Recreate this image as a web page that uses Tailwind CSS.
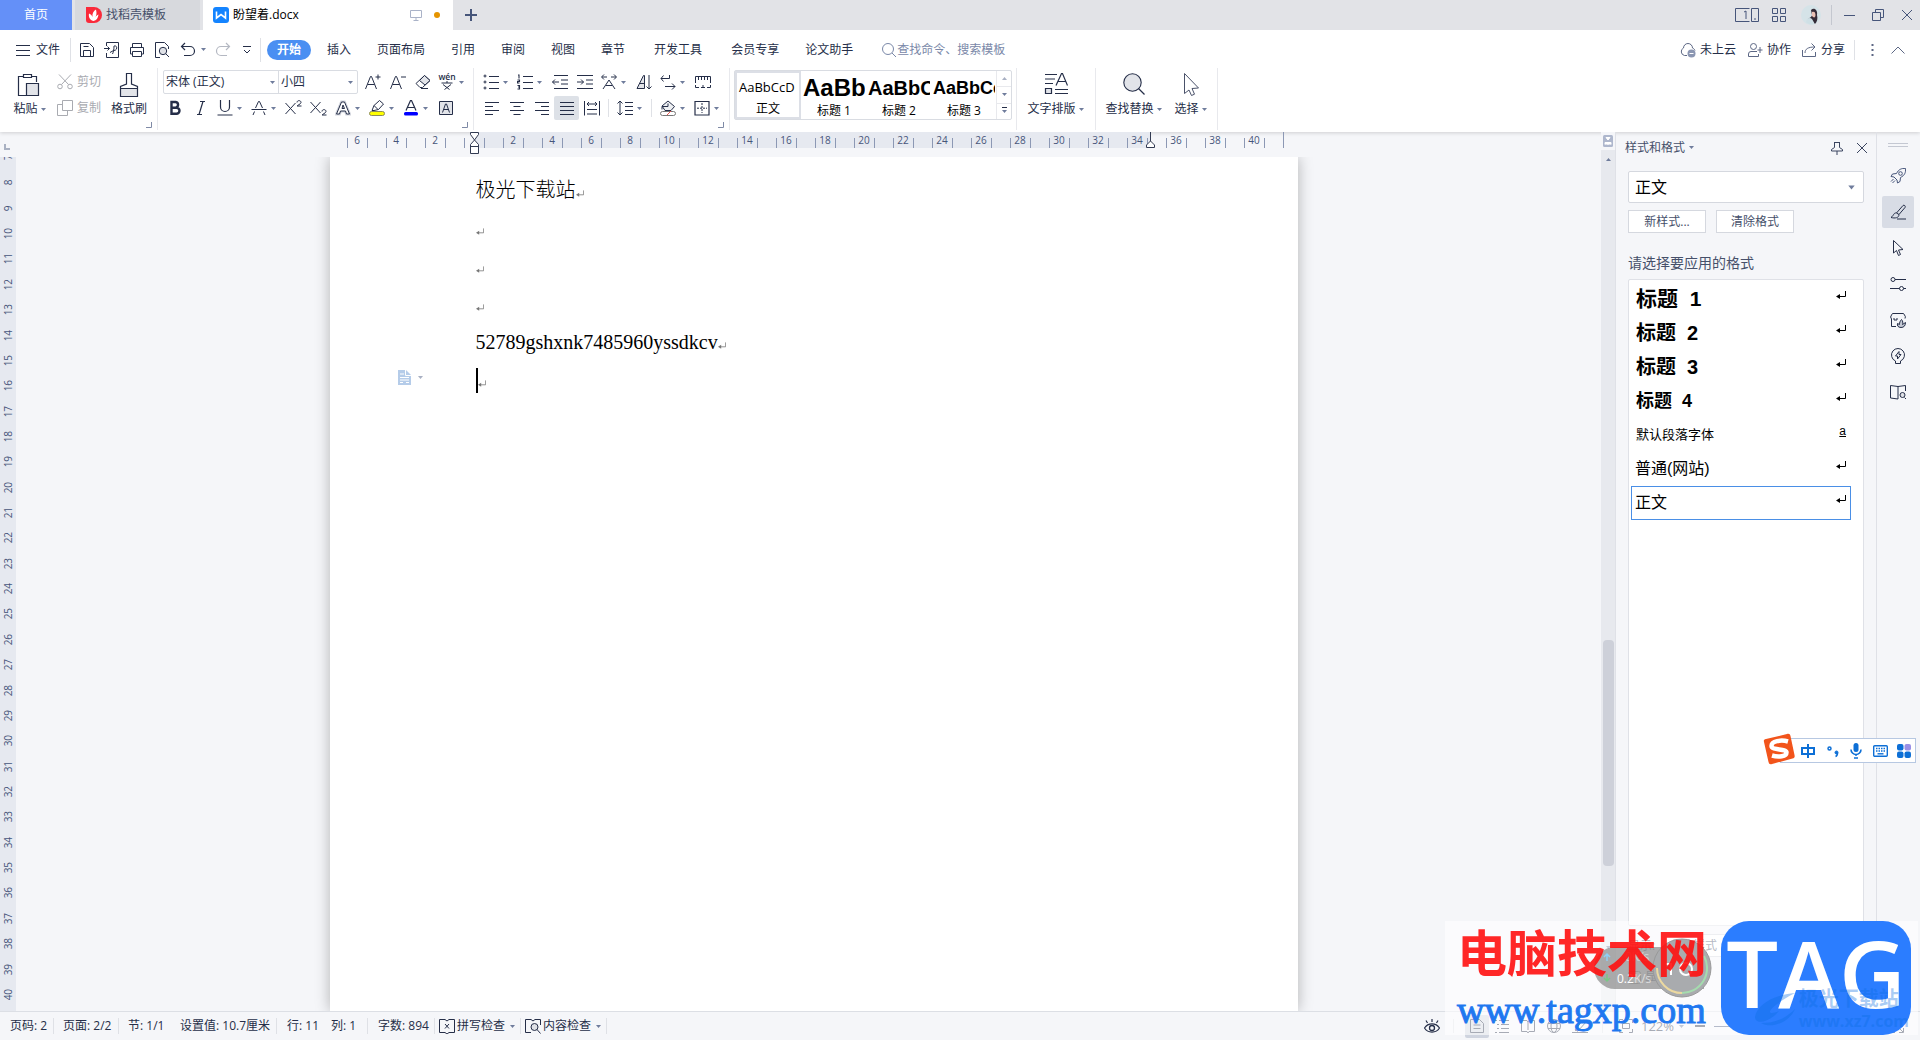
<!DOCTYPE html>
<html lang="zh-CN">
<head>
  <meta charset="UTF-8" />
  <meta name="viewport" content="width=device-width, initial-scale=1.0"/>
  <title>盼望着.docx</title>
  <script src="https://cdn.jsdelivr.net/npm/@tailwindcss/browser@4"></script>
  <style>
    body {
      font-family: 'Open Sans', 'Noto Sans CJK SC', sans-serif;
      fill: none;
      stroke: currentColor;
    }
    svg {
      flex-shrink: 0;
    }
  </style>
</head>
<body class="relative flex h-screen flex-col overflow-hidden bg-[#f5f6f9] text-xs leading-4 text-[#252e48]">

<!-- icon sheet -->
<svg class="hidden">
  <symbol id="caret" viewBox="0 0 7 7"><path d="M1 2h5L3.500 5z" fill="#6f7c9c" stroke="none"/></symbol>
  <symbol id="corner" viewBox="0 0 6 6"><path d="M5.500 0v5.500H0" stroke="#7f8aa6"/></symbol>
  <symbol id="close" viewBox="0 0 12 12"><path d="M1 1l10 10M11 1L1 11"/></symbol>
  <symbol id="save" viewBox="0 0 16 16"><path d="M1.500 1.500h9l4 4v9h-13zM4.500 14V8.500h7V14M4.500 4.500h5"/></symbol>
  <symbol id="exportpdf" viewBox="0 0 16 16"><path d="M2.500 4V.500h12v15h-12V11M0 6.500h5.500M3.500 4.500l2 2-2 2M8.500 12c1-2 1.500-5 1.500-8 4-1 3.500 5-.5 4.500L6 10.500"/></symbol>
  <symbol id="print" viewBox="0 0 16 16"><path d="M3.500 5V1.500h9V5M3.500 12h-2V5.500h13V12h-2M3.500 9.500h9v5h-9z"/></symbol>
  <symbol id="preview" viewBox="0 0 16 16"><path d="M6 15.500H1.500V.500h9l4 4V7"/><circle cx="9" cy="9" r="3.700" fill="#dfe1e6"/><path d="M11.700 11.700L15 15"/></symbol>
  <symbol id="undo" viewBox="0 0 16 16"><path d="M5 1L1.500 4.500 5 8M2 4.500h8a4.500 4.500 0 010 9H4" stroke-width="1.200"/></symbol>
  <symbol id="redo" viewBox="0 0 16 16"><path d="M11 1l3.500 3.500L11 8M14 4.500H6a4.500 4.500 0 000 9h6" stroke-width="1.200"/></symbol>
  <symbol id="more" viewBox="0 0 10 10"><path d="M1 1.500h8M2 5l3 3 3-3"/></symbol>
  <symbol id="search" viewBox="0 0 16 16"><circle cx="7" cy="7" r="5.500"/><path d="M11 11l4 4"/></symbol>
  <symbol id="paste" viewBox="0 0 24 26"><path d="M7 4.500H2.500v19H10M16 4.500h4.500V10M7.500 2.500h8v3h-8z" stroke-width="1.200"/><path d="M10.500 11.500h12v12h-12z" fill="#e2e4e9" stroke-width="1.200"/></symbol>
  <symbol id="brush" viewBox="0 0 24 26"><path d="M3.500 16.500h17v8h-17z" fill="#e2e4e9"/><path d="M3.500 24.500v-10l6-2.500V1.500h5V12l6 2.500v10zM3.500 16.500h17" stroke-width="1.200"/></symbol>
  <symbol id="cut" viewBox="0 0 16 16"><circle cx="3" cy="12.500" r="2.300"/><circle cx="13" cy="12.500" r="2.300"/><path d="M2 .500l9.500 10M14 .500L4.500 10.500"/></symbol>
  <symbol id="copy" viewBox="0 0 16 16"><path d="M5.500 .500h10v10h-10zM5 4.500H.500v11h10V11"/></symbol>
  <symbol id="agrow" viewBox="0 0 16 16"><path d="M.500 15L5.500 2.500h1L11.500 15M2.500 10.500h7M13 .500v5M10.500 3h5"/></symbol>
  <symbol id="ashrink" viewBox="0 0 16 16"><path d="M.500 15L5.500 2.500h1L11.500 15M2.500 10.500h7M11 3h5"/></symbol>
  <symbol id="eraser" viewBox="0 0 16 16"><path d="M1 9.500L9.500 1.500l5.500 5-7.500 7H5z"/><path d="M4.500 6.500L9.500 1.500l5.500 5-5 4.500z" fill="#e2e4e9"/><path d="M6 14.500h7"/></symbol>
  <symbol id="strike" viewBox="0 0 16 16"><path d="M4.500 8L7.500 1.500h1L11.500 8M.500 9.500h15M3.500 11.500L2 15M12.500 11.500L14 15"/></symbol>
  <symbol id="underline" viewBox="0 0 16 16"><path d="M3.500 0v7a4.500 4.500 0 009 0V0M.500 15h15" stroke-width="1.200"/></symbol>
  <symbol id="bold" viewBox="0 0 16 16"><path d="M4.500 2h4.200a2.900 2.900 0 010 5.700H4.500zM4.500 7.700h5a3 3 0 010 6H4.500z" stroke-width="2.400"/></symbol>
  <symbol id="italic" viewBox="0 0 16 16"><path d="M7 1.500h5M4 14.500h5M10 1.500l-4 13" stroke-width="1.200"/></symbol>
  <symbol id="sup" viewBox="0 0 17 16"><path d="M.500 3l10 11M10.500 3l-10 11M12 2.500c0-2.500 4-2.500 4 0 0 1.500-4 3-4 3.500h4.500"/></symbol>
  <symbol id="sub" viewBox="0 0 17 16"><path d="M.500 2l10 11M10.500 2l-10 11M12 11.500c0-2.500 4-2.500 4 0 0 1.500-4 3-4 3.500h4.500"/></symbol>
  <symbol id="aglow" viewBox="0 0 16 16"><path d="M1.500 14L6.500 2h3l5 12h-3l-1-3h-5l-1 3zM7 8.500h2.500L8 5z" stroke="#d3d6de" stroke-width="3"/><path d="M1.500 14L6.500 2h3l5 12h-3l-1-3h-5l-1 3zM7 8.500h2.500L8 5z" fill="#fff"/></symbol>
  <symbol id="marker" viewBox="0 0 16 16"><path d="M3 10.500l2-5 5.500-5 4 3.500-5 5.500-4.500 1zM5 5.500l4 4"/><rect x=".5" y="11.500" width="15" height="4" rx="2" fill="#ff0" stroke="#8b8b5a"/></symbol>
  <symbol id="acolor" viewBox="0 0 16 16"><path d="M3 10.500L7.500.500h1L13 10.500M4.500 7.500h7" stroke-width="1.200"/><rect x="1" y="12" width="14" height="3.500" rx="1.500" fill="#00f" stroke="none"/></symbol>
  <symbol id="abox" viewBox="0 0 16 16"><path d="M1.500 1.500h13v13h-13z" fill="#e2e4e9"/><path d="M4.500 12.500L7.500 4h1l3 8.500M5.500 9.500h5"/></symbol>
  <symbol id="bullets" viewBox="0 0 16 16"><circle cx="2" cy="2" r="1"/><circle cx="2" cy="8" r="1"/><circle cx="2" cy="14" r="1"/><path d="M6 2.500h10M6 8.500h10M6 14.500h10" stroke-width="1.200"/></symbol>
  <symbol id="numbers" viewBox="0 0 16 16"><path d="M1 1h1v3.500M.500 6h2v1.500h-2V9h2M.500 11.500h2v3.500h-2M1 13h1.500M6 2.500h10M6 8.500h10M6 14.500h10" stroke-width="1.100"/></symbol>
  <symbol id="outdent" viewBox="0 0 16 16"><path d="M2 1.500h14M9 6h7M9 10h7M2 14.500h14M.500 8H7M3 5.500L.500 8 3 10.500"/></symbol>
  <symbol id="indent" viewBox="0 0 16 16"><path d="M0 1.500h16M9 6h7M9 10h7M0 14.500h16M0 8h6.500M4 5.500L6.500 8 4 10.500"/></symbol>
  <symbol id="scale" viewBox="0 0 16 16"><path d="M2 15L8 6l6 9M5 11.500h6M1 3h5M10 3h5M3 .500L.500 3 3 5.500M13 .500L15.500 3 13 5.500"/></symbol>
  <symbol id="sort" viewBox="0 0 16 16"><path d="M1 14.500L7.500 1.500h1v13zM4 9.500h4.500" fill="#e2e4e9"/><path d="M13 1v14M10.500 12.500L13 15l2.500-2.500"/></symbol>
  <symbol id="wrap" viewBox="0 0 16 16"><path d="M3.500 1.500L1 4.500l2.500 3M1 4.500h8.500V1M5 12.500h10M12 9.500l3 3-3 3"/></symbol>
  <symbol id="tabs" viewBox="0 0 16 16"><path d="M.500 9V2.500h15V9M3.500 3v3M6.500 3v3M9.500 3v3M12.500 3v3M.500 11v2.500H4M15.500 11v2.500H12M6 13.500h4M8 11v2.500"/></symbol>
  <symbol id="left" viewBox="0 0 16 16"><path d="M1 2.500h14M1 6.500h8M1 10.500h14M1 14.500h8" stroke-width="1.200"/></symbol>
  <symbol id="center" viewBox="0 0 16 16"><path d="M1 2.500h14M4.500 6.500h7M1 10.500h14M4.500 14.500h7" stroke-width="1.200"/></symbol>
  <symbol id="right" viewBox="0 0 16 16"><path d="M1 2.500h14M7 6.500h8M1 10.500h14M7 14.500h8" stroke-width="1.200"/></symbol>
  <symbol id="justify" viewBox="0 0 16 16"><path d="M1 2.500h14M1 6.500h14M1 10.500h14M1 14.500h14" stroke-width="1.200"/></symbol>
  <symbol id="distribute" viewBox="0 0 16 16"><path d="M.500 1v14.500M15.500 1v14.500M3 4h10M5 2L3 4l2 2M11 2l2 2-2 2M3 9.500h10M3 14h10"/></symbol>
  <symbol id="spacing" viewBox="0 0 16 16"><path d="M3 1v14M.500 3.500L3 1l2.500 2.500M.500 12.500L3 15l2.500-2.500M8 2.500h8M8 6.500h8M8 10.500h8M8 14.500h8"/></symbol>
  <symbol id="bucket" viewBox="0 0 16 16"><path d="M2 6l6-5 6.500 5.500L11 10.500H5z" fill="#eef0f3"/><path d="M2 6.500h6V3.500M2 6.500v3"/><rect x=".5" y="11.500" width="15" height="4" rx="2" fill="#fff" stroke="#777"/><path d="M7 15l4-4" stroke="#e8544f"/></symbol>
  <symbol id="borders" viewBox="0 0 16 16"><path d="M1 1.500h14v13.500H1z" stroke-width="1.200"/><path d="M8 3v10M3 8.200h10" stroke-dasharray="2 1"/></symbol>
  <symbol id="typeset" viewBox="0 0 24 24"><path d="M1 2.500h12M1 7h10M1 11.500h8M11 17.500h13M11 21.500h13M12 13.500L17.500 1.500h1L23.500 13.500M14 9.500h8" stroke-width="1.200"/><path d="M1.500 16.500h6v5h-6z" fill="#e2e4e9" stroke-width="1.200"/></symbol>
  <symbol id="find" viewBox="0 0 24 24"><circle cx="10.500" cy="10.500" r="8.700" fill="#e2e4e9" stroke-width="1.100"/><path d="M16.500 16.500l6 6" stroke-width="1.300"/></symbol>
  <symbol id="pointer" viewBox="0 0 24 24"><path d="M5.500 1.500v20l4.500-3.500 2.500 5.500 3-1.300-2.500-5.700 6.500-.5z" stroke="#4a526a"/></symbol>
  <symbol id="mark" viewBox="0 0 10 9"><path d="M9.500 0v5.500H2" /><path d="M4 3L0 5.500 4 8z" fill="currentColor" stroke="none"/></symbol>
  <symbol id="cursor" viewBox="0 0 16 16"><path d="M3.500 .500v12.500l3-2.500 2 5 2-1-2-4.500 4.500-.5z"/></symbol>
</svg>

<header class="shrink-0 bg-white shadow-[0_1px_4px_rgba(0,0,0,0.16)]">
  <!-- window tabs -->
  <div class="flex h-[30px] items-stretch gap-[3px] bg-[#e2e3e7]">
    <button class="w-[72px] bg-[#6490f8] text-white">首页</button>
    <button class="flex w-[125px] items-center gap-1 bg-[#d7d9dd] pl-[11px] text-[#46506a]">
      <svg class="size-4" viewBox="0 0 16 16" stroke="none"><path d="M0 0h8a8 8 0 010 16H3a3 3 0 01-3-3z" fill="#fa2a3a"/><path d="M7.500 14C3 13 2.500 9 3 6.500 5 7.500 6 8.500 6.500 10 6 6.500 7.500 4 10 2.500c1 4 .5 6-1 8 1-1.500 2-2.500 3.500-3-.5 3.500-2 6-5 6.500z" fill="#fff"/></svg>
      找稻壳模板
    </button>
    <div class="flex w-[250px] items-center bg-white pl-[10px] text-black">
      <svg class="mr-1 size-4" viewBox="0 0 16 16" stroke="none"><rect width="16" height="16" rx="3" fill="#1484ff"/><path d="M3.500 4.500v6.500L8 7.500l4.500 3.500V4.500" stroke="#fff" stroke-width="1.600"/></svg>
      盼望着.docx
      <svg class="ml-auto size-3" viewBox="0 0 12 12" stroke="#aab3c8"><path d="M.500 1.500h11v7H.500zM6 8.500v3M3.500 11.500h5"/></svg>
      <span class="mr-[13px] ml-3 size-[6px] rounded-full bg-[#e59400]"></span>
    </div>
    <button class="w-7 pl-[9px]" aria-label="新建"><svg class="size-3" viewBox="0 0 12 12" stroke="#46557a" stroke-width="2"><path d="M6 0v12M0 6h12"/></svg></button>
    <div class="ml-auto flex items-center text-[#46557a]">
      <svg class="mr-[13px] h-[14px] w-6" viewBox="0 0 24 14"><path d="M14.500 .500H.500v13h14M16.500 .500h7v13h-7zM9 4l2-1v8M19 11h2"/></svg>
      <svg class="mr-[15px] h-[14px] w-[14px]" viewBox="0 0 14 14"><path d="M.500 .500h5v5h-5zM8.500 .500h5v5h-5zM.500 8.500h5v5h-5zM8.500 8.500h5v5h-5z"/></svg>
      <svg class="mr-[10px] size-5" viewBox="0 0 20 20" stroke="none"><circle cx="10" cy="10" r="10" fill="#d5e3e8"/><path d="M10 5c3-3 7 0 6 5 1 4 0 7-2 9-2-4-5-5-8-4 2-2 5-3 5-5z" fill="#352c38"/><path d="M11 7c2-1 3.500 0 3.500 3s-2 3-3.500 1z" fill="#eac0b4"/><path d="M6 14c3-2 6-1 7 5-3 1-6 0-8-2z" fill="#cfe0e6"/></svg>
      <span class="mr-3 h-5 w-px bg-[#c4c7cf]"></span>
      <button aria-label="最小化" class="mr-[17px]"><svg class="h-3 w-[11px]" viewBox="0 0 11 12"><path d="M0 6.500h11"/></svg></button>
      <button aria-label="还原" class="mr-[17px]"><svg class="size-3" viewBox="0 0 12 12"><path d="M.500 3.500h8v8h-8zM3.500 3V.500h8v8H9"/></svg></button>
      <button aria-label="关闭" class="mr-[7px]"><svg class="size-3"><use href="#close"/></svg></button>
    </div>
  </div>

  <!-- menu row -->
  <nav class="flex h-[38px] items-center pt-px">
    <button class="ml-4 flex items-center gap-[6px]"><svg class="h-3 w-[14px]" viewBox="0 0 14 12"><path d="M0 1.500h14M0 6.500h14M0 11.500h14"/></svg>文件</button>
    <span class="mr-2 ml-[10px] h-6 w-px bg-[#dfe1e6]"></span>
    <div class="flex items-center gap-[9px]">
      <button aria-label="保存"><svg class="size-4"><use href="#save"/></svg></button>
      <button aria-label="输出为PDF"><svg class="size-4"><use href="#exportpdf"/></svg></button>
      <button aria-label="打印"><svg class="size-4"><use href="#print"/></svg></button>
      <button aria-label="打印预览"><svg class="size-4"><use href="#preview"/></svg></button>
    </div>
    <button aria-label="撤销" class="ml-[10px] flex items-center gap-1"><svg class="size-4"><use href="#undo"/></svg><svg class="size-[7px]"><use href="#caret"/></svg></button>
    <button aria-label="恢复" class="ml-2 text-[#b4b8c2]"><svg class="size-4"><use href="#redo"/></svg></button>
    <button aria-label="更多" class="ml-[11px]"><svg class="size-[10px]"><use href="#more"/></svg></button>
    <span class="ml-2 h-6 w-px bg-[#dfe1e6]"></span>
    <button class="ml-[6px] h-5 w-11 rounded-full bg-[#4a8ff2] font-bold text-white">开始</button>
    <div class="ml-4 flex gap-[26px]">
      <button>插入</button>
      <button>页面布局</button>
      <button>引用</button>
      <button>审阅</button>
      <button>视图</button>
      <button>章节</button>
      <button class="px-[3px]">开发工具</button>
      <button>会员专享</button>
      <button>论文助手</button>
    </div>
    <label class="ml-7 flex items-center text-[#7a88a8]">
      <svg class="size-4"><use href="#search"/></svg>
      <input type="text" aria-label="查找" placeholder="查找命令、搜索模板" class="w-32 outline-none placeholder:text-[#7a88a8]">
    </label>
    <div class="ml-auto flex items-center">
      <button class="flex items-center gap-1"><svg class="size-4" viewBox="0 0 16 16" stroke="#5c6784"><path d="M7 13.500H4.500A4 4 0 013.500 6 4.500 4.500 0 0112.500 6c1.500.5 2 1.500 2.500 2.500"/><circle cx="11.500" cy="11.500" r="4" fill="#8b96b2" stroke="none"/><path d="M9.500 11.500h4" stroke="#fff"/></svg>未上云</button>
      <button class="ml-[11px] flex items-center gap-1"><svg class="size-4" viewBox="0 0 16 16" stroke="#5c6784"><circle cx="6.500" cy="4.500" r="3"/><path d="M10 9.500H4a2.500 2.500 0 00-2.500 2.500v2.500h10V12M13 5v6M10.500 8h5"/></svg>协作</button>
      <button class="ml-[10px] flex items-center gap-1"><svg class="size-4" viewBox="0 0 16 16" stroke="#5c6784"><path d="M1.500 8v6.500h13V10M4 11c0-4 3-6 9.500-6M10.500 1.500L14 5l-3.500 3.500"/></svg>分享</button>
      <span class="ml-[9px] h-5 w-px bg-[#dfe1e6]"></span>
      <button aria-label="更多操作" class="ml-4"><svg class="h-3 w-[3px]" viewBox="0 0 3 12" stroke="none" fill="#5c6784"><path d="M.500 0h2v2h-2zM.500 5h2v2h-2zM.500 10h2v2h-2z"/></svg></button>
      <button aria-label="折叠功能区" class="mr-[15px] ml-[17px]"><svg class="h-2 w-[14px]" viewBox="0 0 14 8" stroke="#5c6784"><path d="M.500 7.500L7 1l6.500 6.500"/></svg></button>
    </div>
  </nav>

  <!-- ribbon -->
  <div class="flex h-16 pb-[2px]">
    <section class="relative flex w-[158px] border-r border-[#e8e9ed] pt-1">
      <button class="flex w-12 flex-col items-center gap-[3px] pl-2">
        <svg class="h-[26px] w-6"><use href="#paste"/></svg>
        <span class="flex items-center gap-[2px] pl-1 whitespace-nowrap">粘贴<svg class="size-[7px]"><use href="#caret"/></svg></span>
      </button>
      <div class="ml-[9px] flex flex-col gap-[10px] pt-[2px] text-[#a9abb1]">
        <button class="flex items-center gap-1"><svg class="size-4"><use href="#cut"/></svg>剪切</button>
        <button class="flex items-center gap-1"><svg class="size-4"><use href="#copy"/></svg>复制</button>
      </div>
      <button class="ml-[10px] flex flex-col items-center gap-[3px]">
        <svg class="h-[26px] w-6"><use href="#brush"/></svg>格式刷
      </button>
      <svg class="absolute right-[5px] bottom-[2px] size-[6px]"><use href="#corner"/></svg>
    </section>

    <section class="relative flex w-[316px] flex-col gap-[2px] border-r border-[#e8e9ed] pt-[2px] pl-[5px]">
      <div class="flex h-6 items-center">
        <div class="mr-[2px] flex h-6 w-[195px] rounded-xs border border-[#d9dce2]">
          <label class="relative flex w-[115px] items-center border-r border-[#d9dce2]">
            <select aria-label="字体" class="w-full appearance-none pl-[2px] outline-none"><option>宋体 (正文)</option></select>
            <svg class="absolute right-[2px] size-[7px]"><use href="#caret"/></svg>
          </label>
          <label class="relative flex flex-1 items-center">
            <select aria-label="字号" class="w-full appearance-none pl-[2px] outline-none"><option>小四</option></select>
            <svg class="absolute right-[3px] size-[7px]"><use href="#caret"/></svg>
          </label>
        </div>
        <button aria-label="增大字号" class="flex w-[25px] justify-center"><svg class="size-4"><use href="#agrow"/></svg></button>
        <button aria-label="减小字号" class="flex w-[25px] justify-center"><svg class="size-4"><use href="#ashrink"/></svg></button>
        <button aria-label="清除格式" class="flex w-[25px] justify-center"><svg class="size-4"><use href="#eraser"/></svg></button>
        <button aria-label="拼音指南" class="flex w-[34px] items-center gap-[3px] pl-1">
          <svg class="size-4 overflow-visible" viewBox="0 0 16 16"><text x="8" y="6" text-anchor="middle" font-size="8.500" font-weight="600" fill="currentColor" stroke="none">wén</text><path d="M2.500 9h11M8 7v2M4 10.500l6.500 5M12 10.500l-6.500 5"/></svg>
          <svg class="size-[7px]"><use href="#caret"/></svg>
        </button>
      </div>
      <div class="flex h-6 items-center">
        <button aria-label="加粗" class="flex w-[25px] justify-center pr-px"><svg class="size-4"><use href="#bold"/></svg></button>
        <button aria-label="倾斜" class="flex w-[25px] justify-center"><svg class="size-4"><use href="#italic"/></svg></button>
        <button aria-label="下划线" class="flex w-[34px] items-center gap-[3px] pl-1"><svg class="size-4"><use href="#underline"/></svg><svg class="size-[7px]"><use href="#caret"/></svg></button>
        <button aria-label="删除线" class="flex w-[34px] items-center gap-[3px] pl-1"><svg class="size-4"><use href="#strike"/></svg><svg class="size-[7px]"><use href="#caret"/></svg></button>
        <button aria-label="上标" class="flex w-[25px] justify-center"><svg class="h-4 w-[17px]"><use href="#sup"/></svg></button>
        <button aria-label="下标" class="flex w-[25px] justify-center"><svg class="h-4 w-[17px]"><use href="#sub"/></svg></button>
        <button aria-label="文字效果" class="flex w-[34px] items-center gap-[3px] pl-1"><svg class="size-4"><use href="#aglow"/></svg><svg class="size-[7px]"><use href="#caret"/></svg></button>
        <button aria-label="突出显示" class="flex w-[34px] items-center gap-[3px] pl-1"><svg class="size-4"><use href="#marker"/></svg><svg class="size-[7px]"><use href="#caret"/></svg></button>
        <button aria-label="字体颜色" class="flex w-[34px] items-center gap-[3px] pl-1"><svg class="size-4"><use href="#acolor"/></svg><svg class="size-[7px]"><use href="#caret"/></svg></button>
        <button aria-label="字符底纹" class="flex w-[25px] justify-center"><svg class="size-4"><use href="#abox"/></svg></button>
      </div>
      <svg class="absolute right-[5px] bottom-[2px] size-[6px]"><use href="#corner"/></svg>
    </section>

    <section class="relative flex w-64 flex-col gap-[2px] border-r border-[#e8e9ed] pt-[2px] pl-[5px]">
      <div class="flex h-6 items-center">
        <button aria-label="项目符号" class="flex w-[34px] items-center gap-[3px] pl-1"><svg class="size-4"><use href="#bullets"/></svg><svg class="size-[7px]"><use href="#caret"/></svg></button>
        <button aria-label="编号" class="flex w-[34px] items-center gap-[3px] pl-1"><svg class="size-4"><use href="#numbers"/></svg><svg class="size-[7px]"><use href="#caret"/></svg></button>
        <button aria-label="减少缩进" class="flex w-[25px] justify-center"><svg class="size-4"><use href="#outdent"/></svg></button>
        <button aria-label="增加缩进" class="flex w-[25px] justify-center"><svg class="size-4"><use href="#indent"/></svg></button>
        <button aria-label="中文版式" class="flex w-[34px] items-center gap-[3px] pl-1"><svg class="size-4"><use href="#scale"/></svg><svg class="size-[7px]"><use href="#caret"/></svg></button>
        <button aria-label="排序" class="flex w-[25px] justify-center"><svg class="size-4"><use href="#sort"/></svg></button>
        <button aria-label="显示标记" class="flex w-[34px] items-center gap-[3px] pl-1"><svg class="size-4"><use href="#wrap"/></svg><svg class="size-[7px]"><use href="#caret"/></svg></button>
        <button aria-label="制表位" class="flex w-[25px] justify-center"><svg class="size-4"><use href="#tabs"/></svg></button>
      </div>
      <div class="flex h-6 items-center">
        <button aria-label="左对齐" class="flex w-[25px] justify-center"><svg class="size-4"><use href="#left"/></svg></button>
        <button aria-label="居中" class="flex w-[25px] justify-center"><svg class="size-4"><use href="#center"/></svg></button>
        <button aria-label="右对齐" class="flex w-[25px] justify-center"><svg class="size-4"><use href="#right"/></svg></button>
        <button aria-label="两端对齐" class="flex h-6 w-[25px] items-center justify-center rounded-xs bg-[#dde1e7]"><svg class="size-4"><use href="#justify"/></svg></button>
        <button aria-label="分散对齐" class="flex w-[25px] justify-center"><svg class="size-4"><use href="#distribute"/></svg></button>
        <span class="mx-1 h-[18px] w-px bg-[#dfe1e6]"></span>
        <button aria-label="行距" class="flex w-[34px] items-center gap-[3px] pl-1"><svg class="size-4"><use href="#spacing"/></svg><svg class="size-[7px]"><use href="#caret"/></svg></button>
        <span class="mx-1 h-[18px] w-px bg-[#dfe1e6]"></span>
        <button aria-label="底纹颜色" class="flex w-[34px] items-center gap-[3px] pl-1"><svg class="size-4"><use href="#bucket"/></svg><svg class="size-[7px]"><use href="#caret"/></svg></button>
        <button aria-label="边框" class="flex w-[34px] items-center gap-[3px] pl-1"><svg class="size-4"><use href="#borders"/></svg><svg class="size-[7px]"><use href="#caret"/></svg></button>
      </div>
      <svg class="absolute right-[5px] bottom-[2px] size-[6px]"><use href="#corner"/></svg>
    </section>

    <section class="flex w-[287px] border-r border-[#e8e9ed] pt-[2px] pl-1">
      <div class="flex h-[50px] w-[278px] rounded-xs border border-[#d9dce2]">
        <button class="flex w-[66px] flex-col items-center overflow-hidden border-2 border-[#dcdfe6] text-black"><span class="flex h-[30px] w-full items-center overflow-hidden pl-[2px] text-[13px]">AaBbCcD</span>正文</button>
        <button class="flex w-[65px] flex-col items-center pt-[2px] pr-px pl-[2px] text-black"><span class="flex h-[30px] w-full items-center overflow-hidden font-['Liberation_Sans'] text-2xl font-bold">AaBb</span>标题 1</button>
        <button class="flex w-[65px] flex-col items-center pt-[2px] pr-px pl-[2px] text-black"><span class="flex h-[30px] w-full items-center overflow-hidden font-['Liberation_Sans'] text-xl font-bold">AaBbC</span>标题 2</button>
        <button class="flex w-[65px] flex-col items-center pt-[2px] pr-px pl-[2px] text-black"><span class="flex h-[30px] w-full items-center overflow-hidden font-['Liberation_Sans'] text-lg font-bold">AaBbCc</span>标题 3</button>
        <div class="flex flex-1 flex-col divide-y divide-[#e8e9ed] border-l border-[#e8e9ed]">
          <button aria-label="上一行" class="flex flex-1 items-center justify-center"><svg class="size-[7px] rotate-180 opacity-60"><use href="#caret"/></svg></button>
          <button aria-label="下一行" class="flex flex-1 items-center justify-center"><svg class="size-[7px]"><use href="#caret"/></svg></button>
          <button aria-label="展开" class="flex flex-1 flex-col items-center justify-center"><svg class="h-px w-[5px]" viewBox="0 0 5 1"><path d="M0 .500h5"/></svg><svg class="size-[7px]"><use href="#caret"/></svg></button>
        </div>
      </div>
    </section>

    <section class="flex w-[79px] justify-center border-r border-[#e8e9ed] pt-1">
      <button class="flex flex-col items-center gap-[5px]"><svg class="size-6"><use href="#typeset"/></svg><span class="flex items-center gap-[2px]">文字排版<svg class="size-[7px]"><use href="#caret"/></svg></span></button>
    </section>
    <section class="flex w-[122px] justify-center gap-3 border-r border-[#e8e9ed] pt-1">
      <button class="flex flex-col items-center gap-[5px]"><svg class="size-6"><use href="#find"/></svg><span class="flex items-center gap-[2px]">查找替换<svg class="size-[7px]"><use href="#caret"/></svg></span></button>
      <button class="flex flex-col items-center gap-[5px]"><svg class="size-6"><use href="#pointer"/></svg><span class="flex items-center gap-[2px]">选择<svg class="size-[7px]"><use href="#caret"/></svg></span></button>
    </section>
  </div>
</header>

<main class="flex min-h-0 flex-1">
  <div class="flex min-w-0 flex-1 flex-col">
    <!-- horizontal ruler -->
    <div class="flex h-[25px] shrink-0 justify-center pl-6 text-[10px] text-[#46557a]">
      <div class="relative w-[969px] pl-[19px]">
        <svg class="absolute top-[12px] -left-[324px] size-[6px]" viewBox="0 0 6 6"><path d="M1 0v5h5" stroke="#a9b1c2" stroke-width="2"/></svg>
        <div class="absolute top-0 left-[147px] h-4 w-[676px] bg-[#e6e9f0]"></div>
        <div id="hruler" class="relative flex h-4 w-[937px] border-r border-[#8c98b4]"></div>
        <svg class="absolute top-0 left-[141px] h-[22px] w-[11px]" viewBox="0 0 11 22" fill="#fff" stroke="#333b52"><path d="M1.500 .500h8v2L5.500 8l4 4.500v9h-8v-9l4-4.500-4-5.500zM1.500 14.500h8"/></svg>
        <svg class="absolute top-0 left-[817px] h-4 w-[11px]" viewBox="0 0 11 16" fill="#fff" stroke="#333b52"><path d="M5.500 9V0M1.500 15.500v-2.500l4-4 4 4v2.500z"/></svg>
      </div>
    </div>
    <div class="flex min-h-0 flex-1">
      <!-- vertical ruler -->
      <div class="w-4 shrink-0 overflow-hidden bg-[#e6e9f0] text-[10px] text-[#46557a]">
        <div id="vruler" class="-mt-3 flex h-[862px] flex-col"></div>
      </div>
      <!-- page -->
      <div class="flex flex-1 justify-center overflow-hidden pl-[10px]">
        <article class="relative w-[968px] bg-white pt-[14px] pl-[146px] font-['Liberation_Serif','Noto_Sans_CJK_SC',serif] text-xl leading-[38px] text-black shadow-[0_0_14px_rgba(0,0,0,0.28)]">
          <p class="flex h-[38px] items-center font-light">极光下载站<svg class="mt-2 h-2 w-2 text-[#777]"><use href="#mark"/></svg></p>
          <p class="flex h-[38px] items-center"><svg class="mt-2 h-2 w-2 text-[#777]"><use href="#mark"/></svg></p>
          <p class="flex h-[38px] items-center"><svg class="mt-2 h-2 w-2 text-[#777]"><use href="#mark"/></svg></p>
          <p class="flex h-[38px] items-center"><svg class="mt-2 h-2 w-2 text-[#777]"><use href="#mark"/></svg></p>
          <p class="flex h-[38px] items-center">52789gshxnk7485960yssdkcv<svg class="mt-2 h-2 w-2 text-[#777]"><use href="#mark"/></svg></p>
          <p class="relative flex h-[38px] items-center">
            <span class="h-[25px] w-[2px] bg-black"></span><svg class="mt-2 h-2 w-2 text-[#777]"><use href="#mark"/></svg>
            <button aria-label="粘贴选项" class="absolute top-[9px] -left-[78px] flex items-center gap-[6px]">
              <svg class="h-[15px] w-[13px]" viewBox="0 0 13 15"><path d="M0 0h8l5 5v10H0z" fill="#b5cce9" stroke="none"/><path d="M7.500 0v5.500H13M2 4h4M2 7.500h9M2 10h9M2 12.500h3M8 12.500h3" stroke="#fff"/></svg>
              <svg class="size-[7px] opacity-60"><use href="#caret"/></svg>
            </button>
          </p>
        </article>
      </div>
    </div>
  </div>

  <!-- scrollbar -->
  <div class="flex w-[14px] flex-col items-center bg-[#e7e9ee]">
    <div class="flex h-[18px] w-full items-center justify-center bg-[#f5f6f9]"><svg class="h-3 w-[10px]" viewBox="0 0 10 12"><rect width="10" height="12" rx="1.500" fill="#aeb7cd" stroke="none"/><path d="M3 2.500h4L5 5zM2 9.500v-2h6v2M5 7v3" stroke="#fff" fill="#fff"/></svg></div>
    <svg class="mt-[6px] size-[7px] rotate-180"><use href="#caret"/></svg>
    <div class="mt-[477px] h-[226px] w-[11px] rounded-sm bg-[#cdd0d9]"></div>
    <svg class="mt-auto mb-[60px] size-[7px]"><use href="#caret"/></svg>
  </div>

  <!-- styles pane -->
  <aside class="flex w-[262px] flex-col border-x border-[#dfe1e7] pr-[12px] pl-[12px] text-[#46506a]">
    <div class="-ml-[3px] flex h-[39px] shrink-0 items-center pb-[8px]">
      <button class="flex items-center gap-[3px]">样式和格式<svg class="size-[7px]"><use href="#caret"/></svg></button>
      <button aria-label="固定" class="ml-auto"><svg class="size-[14px]" viewBox="0 0 14 14" stroke="#3b4560"><path d="M4 1.500h6M4.500 1.500v5l-3 2v1.500h11V8.500l-3-2v-5M7 10v4"/></svg></button>
      <button aria-label="关闭窗格" class="-mr-1 ml-3"><svg class="size-3" stroke="#3b4560"><use href="#close"/></svg></button>
    </div>
    <label class="relative flex h-8 shrink-0 items-center rounded-xs border border-[#d5d8df] bg-white">
      <select aria-label="当前样式" class="w-full appearance-none pl-[6px] text-base text-black outline-none"><option>正文</option></select>
      <svg class="absolute right-[7px] size-[9px]"><use href="#caret"/></svg>
    </label>
    <div class="mt-[7px] flex shrink-0 gap-[10px]">
      <button class="h-[23px] w-[78px] border border-[#d5d8df] bg-white">新样式...</button>
      <button class="h-[23px] w-[78px] border border-[#d5d8df] bg-white">清除格式</button>
    </div>
    <p class="mt-5 text-sm leading-5">请选择要应用的格式</p>
    <ul class="mt-[6px] min-h-0 flex-1 rounded-xs border border-[#dfe1e7] bg-white py-[2px] pr-3 pl-[2px] font-['Liberation_Sans','Noto_Sans_CJK_SC',sans-serif] text-black">
      <li class="flex h-[34px] items-center justify-between border border-transparent px-1 text-[21px] leading-8 font-bold"><span class="whitespace-pre">标题  1</span><svg class="mb-2 h-[9px] w-[10px]"><use href="#mark"/></svg></li>
      <li class="flex h-[34px] items-center justify-between border border-transparent px-1 text-xl leading-8 font-bold"><span class="whitespace-pre">标题  2</span><svg class="mb-2 h-[9px] w-[10px]"><use href="#mark"/></svg></li>
      <li class="flex h-[34px] items-center justify-between border border-transparent px-1 text-xl leading-8 font-bold"><span class="whitespace-pre">标题  3</span><svg class="mb-2 h-[9px] w-[10px]"><use href="#mark"/></svg></li>
      <li class="flex h-[34px] items-center justify-between border border-transparent px-1 text-lg leading-8 font-bold"><span class="whitespace-pre">标题  4</span><svg class="mb-2 h-[9px] w-[10px]"><use href="#mark"/></svg></li>
      <li class="flex h-[34px] items-center justify-between border border-transparent px-1 text-[13px] leading-8">默认段落字体<span class="mb-2 text-xs leading-3 underline">a</span></li>
      <li class="flex h-[34px] items-center justify-between border border-transparent pr-1 pl-[3px] text-base leading-8">普通(网站)<svg class="mb-2 h-[9px] w-[10px]"><use href="#mark"/></svg></li>
      <li class="flex h-[34px] items-center justify-between border border-[#4a8fe6] pr-1 pl-[3px] text-base leading-8">正文<svg class="mb-2 h-[9px] w-[10px]"><use href="#mark"/></svg></li>
    </ul>
    <div class="mt-2 flex h-[23px] shrink-0 items-center">
      <label for="show" class="w-9">显示:</label>
      <span class="relative flex h-[23px] flex-1 items-center border border-[#d5d8df] bg-white"><select id="show" class="w-full appearance-none pl-1 outline-none"><option>有效样式</option></select><svg class="absolute right-[5px] size-[7px]"><use href="#caret"/></svg></span>
    </div>
    <div class="mt-3 mb-[26px] flex shrink-0 items-center justify-between">
      <label class="flex items-center gap-1"><input type="checkbox" class="size-[13px]">显示预览</label>
      <button class="flex items-center gap-1"><span class="size-3 rounded-full border border-[#e8a33d]"></span>智能排版</button>
    </div>
  </aside>

  <!-- task bar -->
  <nav class="flex w-[43px] flex-col items-center gap-1 pt-[11px] pr-[2px]">
    <span class="mb-[9px] h-1 w-5 border-y border-[#c4c8d2]"></span>
    <button aria-label="推荐" class="flex size-8 items-center justify-center text-[#46557a]"><svg class="size-4" viewBox="0 0 16 16"><path d="M15.500 .500c-4-.5-7 1-9 5l-4 .5L1 8.500l3 .5 3 3 .5 3 2.500-1.500.5-4c4-2 5.500-5 5-9zM3.500 11L1 13.500M5 12.500l-2.500 2.500"/><circle cx="10.500" cy="5.500" r="1.800"/></svg></button>
    <button aria-label="样式" class="flex size-8 items-center justify-center rounded-xs bg-[#d8dce5]"><svg class="size-4" viewBox="0 0 16 16"><path d="M6.500 9L13 1.500c1-1 3 .5 2 2L9 10.500zM6.500 9c-3-.5-2.500 2.500-5.500 4.500 4 1 8 .5 8-3M7 15h9"/></svg></button>
    <button aria-label="选择" class="flex size-8 items-center justify-center"><svg class="size-4"><use href="#cursor"/></svg></button>
    <button aria-label="属性" class="flex size-8 items-center justify-center"><svg class="size-4" viewBox="0 0 16 16"><circle cx="3" cy="3.500" r="2"/><circle cx="11.500" cy="12.500" r="2"/><path d="M5 3.500h11M0 12.500h9.500M13.500 12.500H16"/></svg></button>
    <button aria-label="稻壳资源" class="flex size-8 items-center justify-center"><svg class="size-4" viewBox="0 0 16 16"><path d="M6 14.500H1.500V7a3 3 0 010-4l1-1.500h11l1 1.500a3 3 0 01.5 3.500M4 6v2h3V6"/><path d="M11 15.500c-3 0-4-2-3.500-4l2 1c0-2 .5-3.500 2-5 1.500 1.500 1.500 3.500 1 5l3-2c0 3-1.500 5-4.500 5z" fill="#c5cad6"/></svg></button>
    <button aria-label="智能助手" class="flex size-8 items-center justify-center"><svg class="size-4" viewBox="0 0 16 16"><path d="M5.500 15.500V13a6.500 6.500 0 115 0v2.500zM9 3.500l-3.500 4.500h2V11L11 6.500H9z"/></svg></button>
    <button aria-label="查阅" class="flex size-8 items-center justify-center"><svg class="size-4" viewBox="0 0 16 16"><path d="M8 15l-7.500-1V1.500L8 2.500l7.500-1V7M8 2.500V15M14.500 13.500l1.500 1.500"/><circle cx="12.500" cy="11" r="2.500" fill="#dfe1e6"/></svg></button>
    <button aria-label="更多" class="mt-auto mb-4"><svg class="h-1 w-[16px]" viewBox="0 0 16 4"><circle cx="2" cy="2" r="1.500"/><circle cx="8" cy="2" r="1.500"/><circle cx="14" cy="2" r="1.500"/></svg></button>
  </nav>
</main>

<footer class="flex h-[29px] shrink-0 items-center border-t border-[#dcdfe5] bg-[#f5f6f9]">
  <div class="flex items-center whitespace-nowrap">
    <span class="w-[54px] border-r border-[#dfe1e6] pl-[10px]">页码: 2</span>
    <span class="w-[65px] border-r border-[#dfe1e6] pl-[9px]">页面: 2/2</span>
    <span class="w-[61px] pl-[9px]">节: 1/1</span>
    <span class="w-[97px] border-r border-[#dfe1e6]">设置值: 10.7厘米</span>
    <span class="w-[54px] pl-[10px]">行: 11</span>
    <span class="w-[37px] border-r border-[#dfe1e6]">列: 1</span>
    <span class="w-[67px] border-r border-[#dfe1e6] pl-[10px]">字数: 894</span>
    <button class="flex w-[86px] items-center gap-[2px] border-r border-[#dfe1e6] pl-1"><svg class="size-4" viewBox="0 0 16 16"><path d="M6 1.500H.500v13H6L8 16l2-1.500h5.500v-13H10L8 3 6 1.500M6 6l4 4.500M10 6l-4 4.500"/></svg>拼写检查<svg class="ml-[2px] size-[7px]"><use href="#caret"/></svg></button>
    <button class="flex w-[86px] items-center gap-[2px] border-r border-[#dfe1e6] pl-1"><svg class="size-4" viewBox="0 0 16 16"><path d="M6 14.500H.500v-13H6L8 3l2-1.500h5.500V7"/><circle cx="9.500" cy="9" r="3.500" fill="#dfe1e6"/><path d="M12 11.500l3.500 4"/></svg>内容检查<svg class="ml-[2px] size-[7px]"><use href="#caret"/></svg></button>
  </div>
  <div class="ml-auto flex items-center">
    <button aria-label="护眼模式"><svg class="size-4" viewBox="0 0 16 16"><path d="M.500 10C4 4.500 12 4.500 15.500 10 12 15.500 4 15.500.500 10zM8 4V1M3.500 5L2 2.500M12.500 5L14 2.500" stroke-width="1.200"/><circle cx="8" cy="10" r="2.500" stroke-width="1.300"/></svg></button>
    <span class="mr-[11px] ml-[13px] h-[14px] w-px bg-[#dfe1e6]"></span>
    <button aria-label="页面视图" class="flex h-[23px] w-6 items-center justify-center rounded-xs bg-[#cfd4df]"><svg class="size-[14px]" viewBox="0 0 14 14"><path d="M.500 .500h9l4 4v9H.500zM3.500 6h7M3.500 9.500h7"/></svg></button>
    <button aria-label="大纲" class="flex w-[26px] justify-center"><svg class="size-[14px]" viewBox="0 0 14 14"><path d="M0 1.500h2M4 1.500h10M2 5.500h2M6 5.500h8M2 9.500h2M6 9.500h8M0 13.500h2M4 13.500h10"/></svg></button>
    <button aria-label="阅读版式" class="flex w-[26px] justify-center"><svg class="size-[14px]" viewBox="0 0 14 14"><path d="M.500 1.500H6L7 3l1-1.500h5.500v11H8L7 14l-1-1.500H.500zM7 3v8"/></svg></button>
    <button aria-label="Web版式" class="flex w-[26px] justify-center"><svg class="size-[14px]" viewBox="0 0 14 14"><circle cx="7" cy="7" r="6.500"/><ellipse cx="7" cy="7" rx="3" ry="6.500"/><path d="M1 4.500h12M1 9.500h12"/></svg></button>
    <button aria-label="写作模式" class="flex w-[26px] justify-center"><svg class="size-4" viewBox="0 0 16 16"><path d="M3 12L11 2l3 2-8 9zM0 14.500h16M3 12l3 1"/></svg></button>
    <span class="mr-4 ml-[9px] h-[14px] w-px bg-[#dfe1e6]"></span>
    <button aria-label="适合页面"><svg class="size-[14px]" viewBox="0 0 14 14"><path d="M.500 4V.500H4M10 .500h3.500V4M13.500 10v3.500H10M4 13.500H.500V10M3.500 4.500h7v5h-7z"/></svg></button>
    <button class="ml-2 flex items-center gap-1 text-[13px]">122%<svg class="size-[7px]"><use href="#caret"/></svg></button>
    <button aria-label="缩小" class="ml-[9px]"><svg class="size-3" viewBox="0 0 12 12" stroke-width="2"><path d="M1 6h10"/></svg></button>
    <input type="range" aria-label="显示比例" value="50" class="mx-2 h-px w-[143px] appearance-none bg-[#46557a] [&::-webkit-slider-thumb]:size-3 [&::-webkit-slider-thumb]:appearance-none [&::-webkit-slider-thumb]:rounded-full [&::-webkit-slider-thumb]:border [&::-webkit-slider-thumb]:border-[#46557a] [&::-webkit-slider-thumb]:bg-white">
    <button aria-label="放大"><svg class="size-3" viewBox="0 0 12 12" stroke-width="2"><path d="M1 6h10M6 1v10"/></svg></button>
    <button aria-label="全屏" class="mr-4 ml-[13px]"><svg class="size-[14px]" viewBox="0 0 14 14"><path d="M.500 5V.500H5M9 .500h4.500V5M13.500 9v4.500H9M5 13.500H.500V9M1 1l4 4M13 1L9 5M13 13L9 9M1 13l4-4"/></svg></button>
  </div>
</footer>

<!-- input method bar -->
<div class="absolute top-[738px] right-[4px] flex h-[25px] w-[136px] items-center border border-[#b7c8e2] bg-white text-[#0d6fd6]">
  <svg class="absolute -top-[6px] -left-[18px] size-8" viewBox="0 0 32 32" stroke="none"><path d="M3 6l21-5c2-.5 3 0 3.500 2l4 19c.5 2 0 3-2 3.500L9 31c-2 .5-3 0-3.500-2L1 9c-.5-2 0-2.500 2-3z" fill="#f2541b"/><path d="M25 8.500C18 6.500 8.500 8 8.500 13c0 4.500 15 2.500 15 6.500 0 4-8 5-14.500 3" stroke="#fff" stroke-width="4.500"/></svg>
  <svg class="ml-5 size-[14px]" viewBox="0 0 14 14" stroke-width="2"><path d="M1 4h12v6H1zM7 0v14"/></svg>
  <svg class="ml-3 h-[14px] w-3" viewBox="0 0 12 14"><circle cx="2.500" cy="4.500" r="1.500" stroke-width="1.500"/><circle cx="9.500" cy="8.500" r="1.500" fill="currentColor"/><path d="M10.500 9c0 2-.5 3-2 3.500" stroke-width="1.500"/></svg>
  <svg class="ml-[11px] h-4 w-3" viewBox="0 0 12 16"><rect x="3.500" y="0" width="5" height="9" rx="2.500" fill="currentColor" stroke="none"/><path d="M1 6.500a5 5 0 0010 0M6 12v1M4 15h4" stroke-width="1.600"/></svg>
  <svg class="ml-[11px] h-3 w-[15px]" viewBox="0 0 15 12"><rect x=".7" y=".7" width="13.600" height="10.600" rx="1" stroke-width="1.400"/><path d="M3 3.500h9M3 6h9" stroke-width="1.500" stroke-dasharray="1.500 1"/><path d="M4.500 8.800h6" stroke-width="1.400"/></svg>
  <svg class="ml-[9px] size-[14px]" viewBox="0 0 14 14" fill="currentColor" stroke="none"><rect width="6.500" height="6.500" rx="2"/><rect x="7.500" width="6.500" height="6.500" rx="2" fill="#9a8fe6"/><rect y="7.500" width="6.500" height="6.500" rx="2"/><rect x="7.500" y="7.500" width="6.500" height="6.500" rx="2"/></svg>
</div>

<!-- site banner -->
<div class="absolute right-[2px] bottom-[5px] flex h-[114px] w-[473px] items-start justify-between bg-white/60 pr-[7px] pl-3">
  <div class="absolute top-[26px] left-[149px] flex h-[42px] w-[110px] flex-col justify-between rounded-l-full bg-[#777]/60 py-[2px] pl-[23px] text-xs text-white"><span class="pl-2 opacity-50">0K/s</span><span>0.2<span class="opacity-60">K/s</span></span></div>
  <svg class="absolute top-[29px] left-[158px] h-9 w-2" viewBox="0 0 8 36"><path d="M4 11V4M1 7l3-3 3 3" stroke="#8fd0f5" stroke-width="1.500"/><path d="M4 24v7M1 28l3 3 3-3" stroke="#79c886" stroke-width="1.500"/></svg>
  <svg class="absolute top-[17px] left-[207px] size-[60px]" viewBox="0 0 60 60"><circle cx="30" cy="30" r="29" fill="#a9abae" stroke="#999"/><path d="M5 30a25 25 0 0025 25" stroke="#ecd9a0" stroke-width="2"/><path d="M30 55a25 25 0 0022-37" stroke="#a5dcae" stroke-width="2"/><circle cx="34" cy="31" r="6" stroke="#fff" stroke-width="2"/><path d="M14 26h5v11" stroke="#fff" stroke-width="2"/></svg>
  <div class="relative flex flex-col">
    <span class="h-[73px] pt-1 font-['Noto_Sans_CJK_SC',sans-serif] text-[50px] leading-[50px] font-bold text-[#ff1010]/90">电脑技术网</span>
    <span class="font-['Liberation_Serif',serif] text-[38px] leading-[32px] text-[#1f78f0] [-webkit-text-stroke:1px]">www.tagxp.com</span>
  </div>
  <div class="relative flex h-[114px] w-[190px] items-center justify-center rounded-[28px] bg-[#2b7dff] pb-[10px] font-['Open_Sans',sans-serif] text-[92px] leading-[92px] font-semibold text-white">
    TAG
    <div class="absolute right-[2px] bottom-1 flex items-center gap-1 font-['Open_Sans','Noto_Sans_CJK_SC',sans-serif] text-[#0a6ce0]/35">
      <svg class="h-9 w-10" viewBox="0 0 40 36" stroke="none" fill="currentColor"><path d="M40 2C18 4 2 14 0 26c0 8 14 6 24-6C10 26 10 18 40 2zM6 32c10 6 28 0 34-14-10 10-20 14-34 14z"/></svg>
      <span class="flex flex-col"><span class="text-xl leading-6 font-bold">极光下载站</span><span class="text-base leading-5 font-bold">www.xz7.com</span></span>
    </div>
  </div>
</div>

<script>
  // horizontal ruler: one numbered and one plain cell per two characters
  const hruler = document.getElementById('hruler');
  for (let n = -6; n <= 40; n += 2) {
    const label = n === 0 ? '' : Math.abs(n);
    hruler.insertAdjacentHTML('beforeend',
      `<span class="flex flex-1 items-end"><span class="h-[10px] flex-1 border-l border-[#8c98b4] pr-px text-center leading-[4px]">${label}</span><span class="h-[10px] flex-1 border-l border-[#8c98b4]"></span></span>`);
  }

  const vruler = document.getElementById('vruler');
  for (let n = 7; n <= 40; n++) {
    vruler.insertAdjacentHTML('beforeend',
      `<span class="flex flex-1 rotate-180 items-center justify-center leading-4 [writing-mode:vertical-rl]">${n}</span>`);
  }
</script>

</body>
</html>
